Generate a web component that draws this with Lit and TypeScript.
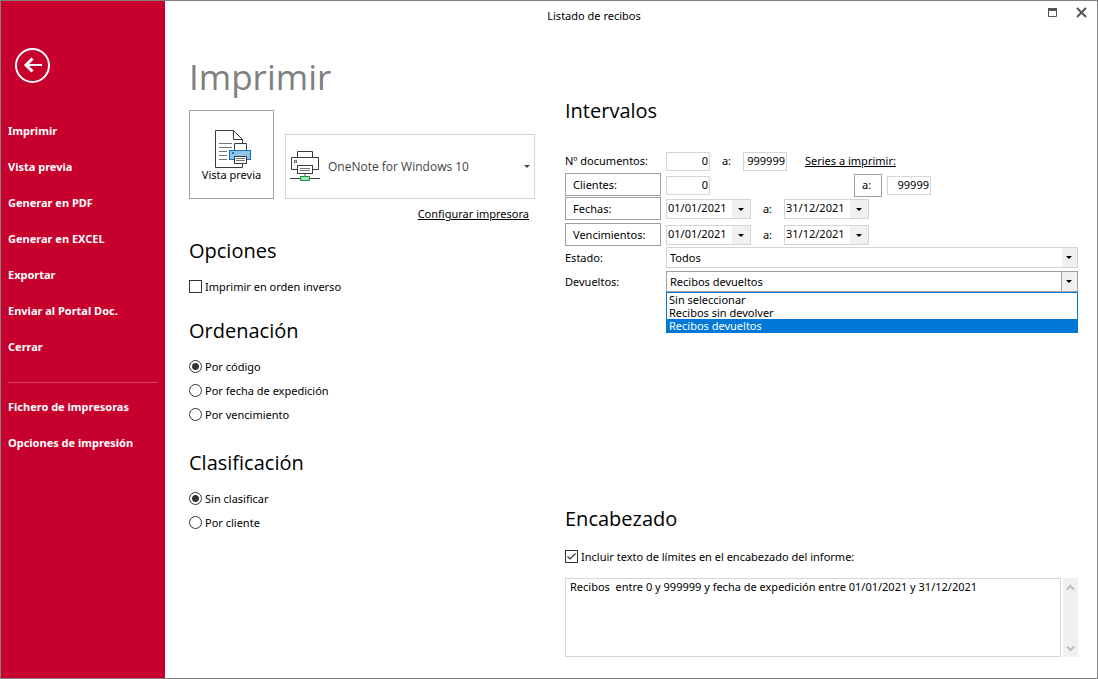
import { LitElement, html, css, svg } from "lit";
import { customElement, property, state } from "lit/decorators.js";
import { classMap } from "lit/directives/class-map.js";

@customElement("date-field")
class DateField extends LitElement {
  @property() value = "";
  @property() name = "";

  static styles = css`
    :host {
      display: block;
      width: 85px;
    }
    .box {
      display: flex;
      box-sizing: border-box;
      height: 20px;
      border: 1px solid #d5d5d5;
      background: #fff;
    }
    .text {
      flex: 1;
      min-width: 0;
      border: 0;
      padding: 0 0 2px 1px;
      outline: 0;
      background: none;
      font: 11px/16px "Noto Sans", "Open Sans", sans-serif;
      color: #000;
    }
    .open {
      display: grid;
      place-items: center;
      width: 18px;
      padding: 0;
      border: 0;
      background: #f0f0f0;
    }
  `;

  render() {
    return html`<div class="box">
      <input class="text" type="text" aria-label=${this.name} .value=${this.value} />
      <button class="open" aria-label="Abrir calendario">
        <svg width="6" height="3" viewBox="0 0 6 3"><path d="M0 0h6L3 3z" fill="#000" /></svg>
      </button>
    </div>`;
  }
}

const menu = [
  "Imprimir",
  "Vista previa",
  "Generar en PDF",
  "Generar en EXCEL",
  "Exportar",
  "Enviar al Portal Doc.",
  "Cerrar",
];
const setupMenu = ["Fichero de impresoras", "Opciones de impresión"];
const returned = ["Sin seleccionar", "Recibos sin devolver", "Recibos devueltos"];

const previewIcon = svg`
  <path d="M27.500 13V9.500L18.500 .500H.500V37.500H27.500V34" fill="none" stroke="#3a3a3a" />
  <path d="M18.500 .500V9.500H27.500" fill="none" stroke="#3a3a3a" />
  <path d="M4 13.500H17M4 17.500H17M4 21.500H12M4 25.500H12M4 29.500H12" stroke="#767676" />
  <path d="M19.500 20V13.500H31.500V20" fill="#fff" stroke="#3a3a3a" />
  <rect x="14.500" y="20.500" width="21" height="9" fill="#8cc4ee" stroke="#1b6fbb" />
  <rect x="17" y="22" width="2" height="2" fill="#1b6fbb" />
  <rect x="19.500" y="26.500" width="12" height="7" fill="#fff" stroke="#3a3a3a" />
  <path d="M21 28.500H30M21 30.500H30" stroke="#767676" />`;

const printerIcon = svg`
  <path d="M7.500 6.500V.500H22.500V6.500" fill="#fff" stroke="#3a3a3a" />
  <path d="M7.500 18.500H1.500V6.500H28.500V18.500H22.500" fill="#fff" stroke="#3a3a3a" />
  <rect x="4.500" y="9.500" width="2" height="2" fill="none" stroke="#767676" />
  <rect x="7.500" y="14.500" width="15" height="8" fill="#fff" stroke="#3a3a3a" />
  <path d="M10 17.500H20M10 19.500H20" stroke="#767676" />
  <path d="M15 23V25" stroke="#b0b0b0" stroke-width="2" />
  <path d="M0 27.500H10M20 27.500H30" stroke="#3a3a3a" />
  <rect x="10.500" y="25.500" width="9" height="4" fill="#a8dfb8" stroke="#109b48" />`;

@customElement("app-root")
class AppRoot extends LitElement {
  @state() private pick = 2;

  static styles = css`
    :host {
      display: grid;
      grid-template-columns: 164px minmax(0, 1fr);
      box-sizing: border-box;
      min-height: 100vh;
      border: 1px solid #808080;
      background: #fff;
      color: #000;
      font: 11px/16px "Noto Sans", "Open Sans", sans-serif;
    }
    button,
    input,
    select,
    textarea {
      box-sizing: border-box;
      margin: 0;
      font: inherit;
      color: inherit;
      border-radius: 0;
    }
    a {
      color: inherit;
    }

    .side {
      background: #c8002d;
      color: #fff;
      padding: 47px 7px 24px;
    }
    .back {
      display: block;
      width: 35px;
      height: 35px;
      margin: 0 0 30px 7px;
      padding: 0;
      border: 0;
      background: none;
    }
    .back svg {
      display: block;
    }
    .link {
      display: block;
      line-height: 36px;
      font-weight: 700;
      text-decoration: none;
    }
    .line {
      height: 1px;
      margin: 17px 0 6px;
      border: 0;
      background: #d94062;
    }

    .main {
      display: flex;
      flex-direction: column;
    }
    .bar {
      display: flex;
      align-items: center;
      height: 30px;
    }
    .title {
      flex: 1;
      text-align: center;
    }
    .window {
      display: flex;
      gap: 18px;
      width: 52px;
      justify-content: flex-end;
      padding: 0 10px 8px 12px;
    }
    .window button {
      width: 11px;
      height: 11px;
      padding: 0;
      border: 0;
      background: none;
    }
    .window svg {
      display: block;
    }

    .body {
      flex: 1;
      display: grid;
      grid-template-columns: 346px minmax(0, 1fr);
      column-gap: 30px;
      padding: 20px 19px 21px 24px;
    }
    .heading {
      margin: 0;
      font-family: "Open Sans", "Noto Sans", sans-serif;
      font-size: 35px;
      line-height: 52px;
      font-weight: 400;
      color: #808080;
    }
    .sub {
      margin: 0 0 8px;
      font-family: "Open Sans", "Noto Sans", sans-serif;
      font-size: 20px;
      line-height: 32px;
      font-weight: 400;
    }

    .target {
      display: flex;
      align-items: flex-end;
      gap: 11px;
      margin-top: 7px;
    }
    .preview {
      display: flex;
      flex-direction: column;
      align-items: center;
      width: 85px;
      height: 89px;
      padding: 2px 0 0;
      justify-content: center;
      line-height: 14px;
      border: 1px solid #a0a0a0;
      background: #fff;
    }
    .preview svg {
      margin-left: 4px;
    }
    .printer {
      flex: 1;
      display: flex;
      align-items: center;
      box-sizing: border-box;
      height: 65px;
      padding-left: 4px;
      border: 1px solid #d5d5d5;
    }
    .printer select {
      flex: 1;
      height: 40px;
      padding: 0 0 0 8px;
      border: 0;
      appearance: none;
      font-family: "Open Sans", "Noto Sans", sans-serif;
      font-size: 12px;
      color: #444;
      background: url("data:image/svg+xml,%3Csvg xmlns='http://www.w3.org/2000/svg' width='6' height='3'%3E%3Cpath d='M0 0h6L3 3z' fill='%23444'/%3E%3C/svg%3E")
        no-repeat right 4px center;
    }
    .setup {
      display: flex;
      justify-content: flex-end;
      padding: 7px 6px 13px;
    }
    .group {
      margin: 0 0 16px;
    }
    .group + .group {
      margin-bottom: 20px;
    }
    .choice {
      display: flex;
      align-items: center;
      gap: 3px;
      height: 24px;
    }
    .mark {
      appearance: none;
      flex: none;
      width: 13px;
      height: 13px;
      margin-bottom: 1px;
      border: 1px solid #333;
      background: #fff;
    }
    .mark[type="radio"] {
      border-radius: 50%;
    }
    .mark[type="radio"]:checked {
      background: radial-gradient(circle, #333 3px, #fff 4px);
    }
    .mark[type="checkbox"]:checked {
      background: url("data:image/svg+xml,%3Csvg xmlns='http://www.w3.org/2000/svg' width='11' height='11'%3E%3Cpath d='M1.500 5.500L4 8L9.500 2.500' fill='none' stroke='%23333' stroke-width='1.200'/%3E%3C/svg%3E");
    }

    .right {
      display: flex;
      flex-direction: column;
      padding-top: 44px;
    }
    .fields {
      display: grid;
      grid-template-columns: 96px minmax(0, 1fr);
      column-gap: 5px;
      grid-auto-rows: 24px;
      margin-top: 14px;
    }
    .cell {
      display: flex;
      align-items: center;
    }
    .name {
      line-height: 24px;
    }
    .push {
      height: 23px;
      padding: 0 7px;
      border: 1px solid #a0a0a0;
      background: #fff;
      text-align: left;
    }
    .num {
      width: 44px;
      height: 19px;
      padding: 0 1px 2px 0;
      border: 1px solid #d5d5d5;
      text-align: right;
    }
    .to {
      width: 33px;
      text-align: center;
    }
    .gap {
      width: 144px;
    }
    .small {
      width: 28px;
      margin-right: 5px;
    }
    .series {
      margin-left: 18px;
    }
    .dates {
      margin-top: 2px;
      margin-bottom: -2px;
    }
    .choose {
      margin-top: 2px;
      line-height: 22px;
    }
    .combo {
      position: relative;
    }
    .pick {
      display: block;
      width: 100%;
      height: 21px;
      padding: 0 18px 0 3px;
      border: 1px solid #d5d5d5;
      appearance: none;
      line-height: 16px;
      background:
        url("data:image/svg+xml,%3Csvg xmlns='http://www.w3.org/2000/svg' width='6' height='3'%3E%3Cpath d='M0 0h6L3 3z'/%3E%3C/svg%3E")
          no-repeat right 5px center,
        linear-gradient(#f0f0f0, #f0f0f0) no-repeat right / 15px 100%,
        #fff;
    }
    .pick.open {
      border-color: #a0a0a0;
      background:
        url("data:image/svg+xml,%3Csvg xmlns='http://www.w3.org/2000/svg' width='6' height='3'%3E%3Cpath d='M0 0h6L3 3z'/%3E%3C/svg%3E")
          no-repeat right 5px center,
        linear-gradient(90deg, #a0a0a0 1px, #f0f0f0 1px) no-repeat right / 16px 100%,
        #fff;
    }
    .list {
      position: absolute;
      z-index: 1;
      top: 21px;
      left: 0;
      right: 0;
      margin: 0;
      padding: 0;
      border: 1px solid #0078d7;
      background: #fff;
      list-style: none;
    }
    .item {
      padding-left: 2px;
      line-height: 13px;
    }
    .item.on {
      background: #0078d7;
      color: #fff;
    }

    .foot {
      margin-top: auto;
      padding-top: 64px;
    }
    .foot .choice {
      margin: 10px 0 9px;
    }
    .note {
      display: grid;
      grid-template-columns: minmax(0, 1fr) 15px;
      column-gap: 2px;
      height: 79px;
    }
    .text {
      width: 100%;
      height: 100%;
      padding: 0 4px;
      border: 1px solid #d5d5d5;
      resize: none;
      overflow: hidden;
      white-space: pre-wrap;
    }
    .scroll {
      display: flex;
      flex-direction: column;
      justify-content: space-between;
      background: #f0f0f0;
    }
    .scroll button {
      display: grid;
      place-items: center;
      height: 18px;
      padding: 0;
      border: 0;
      background: none;
    }
  `;

  private choice(type: string, group: string, text: string, on = false) {
    return html`<label class="choice">
      <input class="mark" type=${type} name=${group} ?checked=${on} />${text}
    </label>`;
  }

  private dates(id: string, text: string, extra = "") {
    return html`
      <button class="push ${extra}">${text}</button>
      <div class="cell ${extra}">
        <date-field value="01/01/2021" name="${id} desde"></date-field>
        <span class="to">a:</span>
        <date-field value="31/12/2021" name="${id} hasta"></date-field>
      </div>`;
  }

  render() {
    return html`
      <nav class="side">
        <button class="back" aria-label="Volver">
          <svg width="35" height="35" viewBox="0 0 35 35" fill="none" stroke="#fff">
            <circle cx="17.500" cy="17.500" r="16.500" stroke-width="2" />
            <path d="M10 17H27" stroke-width="2" />
            <path d="M17.500 10.500L11 17L17.500 23.500" stroke-width="3" />
          </svg>
        </button>
        ${menu.map((m) => html`<a class="link" href="#">${m}</a>`)}
        <hr class="line" />
        ${setupMenu.map((m) => html`<a class="link" href="#">${m}</a>`)}
      </nav>

      <main class="main">
        <header class="bar">
          <span class="title">Listado de recibos</span>
          <div class="window">
            <button aria-label="Maximizar">
              <svg width="11" height="11" viewBox="0 0 11 11">
                <path d="M1.500 1.500H9.500V9.500H1.500Z" fill="none" stroke="#555" />
                <path d="M1 1H10V4H1Z" fill="#555" />
              </svg>
            </button>
            <button aria-label="Cerrar">
              <svg width="11" height="11" viewBox="0 0 11 11">
                <path d="M1 1L10 10M10 1L1 10" stroke="#555" stroke-width="2" />
              </svg>
            </button>
          </div>
        </header>

        <div class="body">
          <div>
            <h1 class="heading">Imprimir</h1>
            <div class="target">
              <button class="preview">
                <svg width="37" height="38" viewBox="0 0 37 38">${previewIcon}</svg>
                Vista previa
              </button>
              <div class="printer">
                <svg width="30" height="31" viewBox="0 0 30 31">${printerIcon}</svg>
                <select aria-label="Impresora">
                  <option>OneNote for Windows 10</option>
                </select>
              </div>
            </div>
            <div class="setup"><a href="#">Configurar impresora</a></div>

            <section class="group">
              <h2 class="sub">Opciones</h2>
              ${this.choice("checkbox", "inverso", "Imprimir en orden inverso")}
            </section>
            <section class="group">
              <h2 class="sub">Ordenación</h2>
              ${this.choice("radio", "orden", "Por código", true)}
              ${this.choice("radio", "orden", "Por fecha de expedición")}
              ${this.choice("radio", "orden", "Por vencimiento")}
            </section>
            <section class="group">
              <h2 class="sub">Clasificación</h2>
              ${this.choice("radio", "clase", "Sin clasificar", true)}
              ${this.choice("radio", "clase", "Por cliente")}
            </section>
          </div>

          <div class="right">
            <h2 class="sub">Intervalos</h2>
            <div class="fields">
              <label class="name" for="doc">Nº documentos:</label>
              <div class="cell">
                <input id="doc" class="num" value="0" />
                <span class="to">a:</span>
                <input class="num" aria-label="Hasta documento" value="999999" />
                <a class="series" href="#">Series a imprimir:</a>
              </div>
              <button class="push">Clientes:</button>
              <div class="cell">
                <input class="num" aria-label="Desde cliente" value="0" />
                <span class="gap"></span>
                <button class="push small">a:</button>
                <input class="num" aria-label="Hasta cliente" value="99999" />
              </div>
              ${this.dates("Fechas", "Fechas:")}
              ${this.dates("Vencimientos", "Vencimientos:", "dates")}
              <label class="name choose" for="estado">Estado:</label>
              <div class="combo choose">
                <select id="estado" class="pick"><option>Todos</option></select>
              </div>
              <label class="name choose" for="devueltos">Devueltos:</label>
              <div class="combo choose">
                <select id="devueltos" class="pick open">
                  ${returned.map((r, i) => html`<option ?selected=${i === this.pick}>${r}</option>`)}
                </select>
                <ul class="list" role="listbox" aria-label="Devueltos">
                  ${returned.map(
                    (r, i) => html`<li
                      class=${classMap({ item: true, on: i === this.pick })}
                      role="option"
                      aria-selected=${i === this.pick}
                      @click=${() => (this.pick = i)}
                    >${r}</li>`
                  )}
                </ul>
              </div>
            </div>

            <section class="foot">
              <h2 class="sub">Encabezado</h2>
              ${this.choice("checkbox", "limites", "Incluir texto de límites en el encabezado del informe:", true)}
              <div class="note">
                <textarea
                  class="text"
                  aria-label="Texto del encabezado"
                  .value=${"Recibos  entre 0 y 999999 y fecha de expedición entre 01/01/2021 y 31/12/2021"}
                ></textarea>
                <div class="scroll">
                  <button aria-label="Subir">
                    <svg width="9" height="7" viewBox="0 0 9 7"><path d="M1 5.500L4.500 2L8 5.500" fill="none" stroke="#bbb" stroke-width="2" /></svg>
                  </button>
                  <button aria-label="Bajar">
                    <svg width="9" height="7" viewBox="0 0 9 7"><path d="M1 1.500L4.500 5L8 1.500" fill="none" stroke="#bbb" stroke-width="2" /></svg>
                  </button>
                </div>
              </div>
            </section>
          </div>
        </div>
      </main>
    `;
  }
}
